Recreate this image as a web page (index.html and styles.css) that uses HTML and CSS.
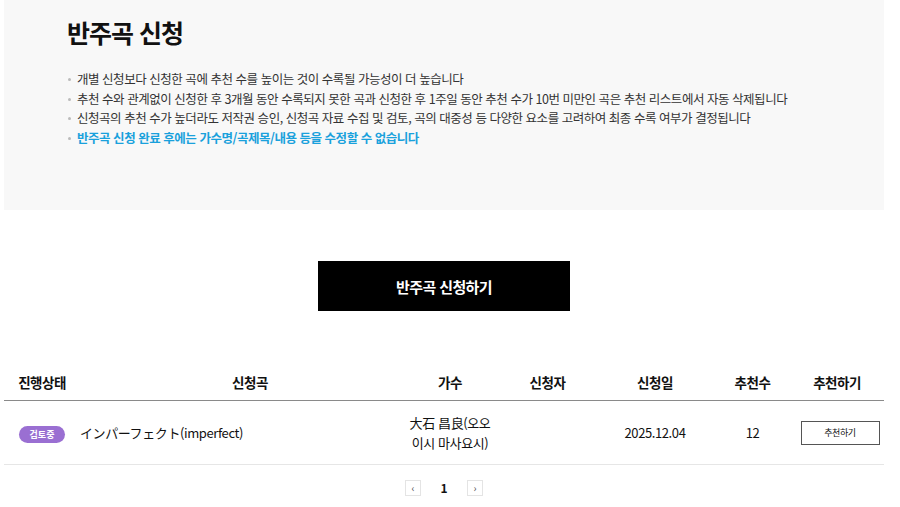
FILE: index.html
```html
<!DOCTYPE html>
<html lang="ko">
<head>
<meta charset="utf-8">
<link rel="stylesheet" href="styles.css">
</head>
<body>
<div class="page">
  <section class="intro">
    <h1 class="title">반주곡 신청</h1>
    <ul class="notes">
      <li>개별 신청보다 신청한 곡에 추천 수를 높이는 것이 수록될 가능성이 더 높습니다</li>
      <li>추천 수와 관계없이 신청한 후 3개월 동안 수록되지 못한 곡과 신청한 후 1주일 동안 추천 수가 10번 미만인 곡은 추천 리스트에서 자동 삭제됩니다</li>
      <li>신청곡의 추천 수가 높더라도 저작권 승인, 신청곡 자료 수집 및 검토, 곡의 대중성 등 다양한 요소를 고려하여 최종 수록 여부가 결정됩니다</li>
      <li class="hl">반주곡 신청 완료 후에는 가수명/곡제목/내용 등을 수정할 수 없습니다</li>
    </ul>
  </section>
  <div class="cta-wrap">
    <button class="cta">반주곡 신청하기</button>
  </div>
  <div class="table">
    <div class="row head">
      <div class="c">진행상태</div>
      <div class="c song-h">신청곡</div>
      <div class="c">가수</div>
      <div class="c">신청자</div>
      <div class="c">신청일</div>
      <div class="c">추천수</div>
      <div class="c">추천하기</div>
    </div>
    <div class="row body">
      <div class="c"><span class="badge">검토중</span></div>
      <div class="c song">インパーフェクト(imperfect)</div>
      <div class="c singer">大石 昌良(오오 이시 마사요시)</div>
      <div class="c"></div>
      <div class="c">2025.12.04</div>
      <div class="c">12</div>
      <div class="c"><button class="rec">추천하기</button></div>
    </div>
  </div>
  <nav class="pager">
    <span class="pbtn">&lsaquo;</span>
    <span class="pnum">1</span>
    <span class="pbtn">&rsaquo;</span>
  </nav>
</div>
</body>
</html>
```
FILE: styles.css
```css
* { box-sizing: border-box; }
html, body { margin: 0; padding: 0; background: #fff; }
body {
  font-family: "Noto Sans CJK KR", "Noto Sans", sans-serif;
  color: #111;
}
.page { width: 880px; margin-left: 4px; }
.intro {
  background: #f8f8f8;
  height: 210px;
  padding: 14px 0 0 63px;
}
.title {
  margin: 0;
  font-size: 25px;
  font-weight: 700;
  letter-spacing: -1px;
  line-height: 36px;
  color: #111;
}
.notes {
  list-style: none;
  margin: 19px 0 0;
  padding: 0;
}
.notes li {
  position: relative;
  padding-left: 10px;
  font-size: 12.5px;
  line-height: 19.7px;
  letter-spacing: -0.47px;
  color: #333;
}
.notes li::before {
  content: "";
  position: absolute;
  left: 1px;
  top: 9px;
  width: 3px;
  height: 3px;
  border-radius: 50%;
  background: #bbb;
}
.notes li.hl { color: #1aa1dc; font-weight: 700; }
.cta-wrap {
  display: flex;
  justify-content: center;
  padding: 51px 0 0;
}
.cta {
  width: 252px;
  height: 50px;
  background: #000;
  color: #fff;
  border: 0;
  font-family: inherit;
  font-size: 15px;
  font-weight: 700;
  letter-spacing: -0.6px;
}
.table { margin-top: 52px; }
.row {
  display: grid;
  grid-template-columns: 76px 320px 100px 95px 120px 75px 94px;
  align-items: center;
}
.row .c { text-align: center; }
.head {
  height: 38px;
  border-bottom: 1px solid #8a8a8a;
  font-size: 13.5px;
  font-weight: 700;
  letter-spacing: -0.5px;
}
.head .song-h { padding-left: 20px; }
.body {
  height: 64px;
  border-bottom: 1px solid #e6e6e6;
  font-size: 13px;
  letter-spacing: -0.4px;
}
.body .song { text-align: left; }
.singer { padding: 0 9px; line-height: 20px; }
.badge {
  display: inline-block;
  width: 46px;
  height: 17px;
  line-height: 17px;
  border-radius: 9px;
  background: #9a6fd2;
  color: #fff;
  font-size: 9px;
  font-weight: 700;
  letter-spacing: 0;
  margin-left: 0;
}
.rec {
  width: 79px;
  height: 24px;
  background: #fff;
  border: 1px solid #555;
  font-family: inherit;
  font-size: 9px;
  letter-spacing: -0.4px;
  color: #111;
  margin-left: 6px;
}
.pager {
  display: flex;
  justify-content: center;
  align-items: center;
  gap: 16px;
  margin-top: 14px;
}
.pbtn {
  width: 16px;
  height: 16px;
  border: 1px solid #e4e4e4;
  font-size: 10px;
  line-height: 13px;
  text-align: center;
  color: #555;
}
.pnum { font-size: 12px; font-weight: 700; width: 14px; text-align: center; color: #111; }
```
